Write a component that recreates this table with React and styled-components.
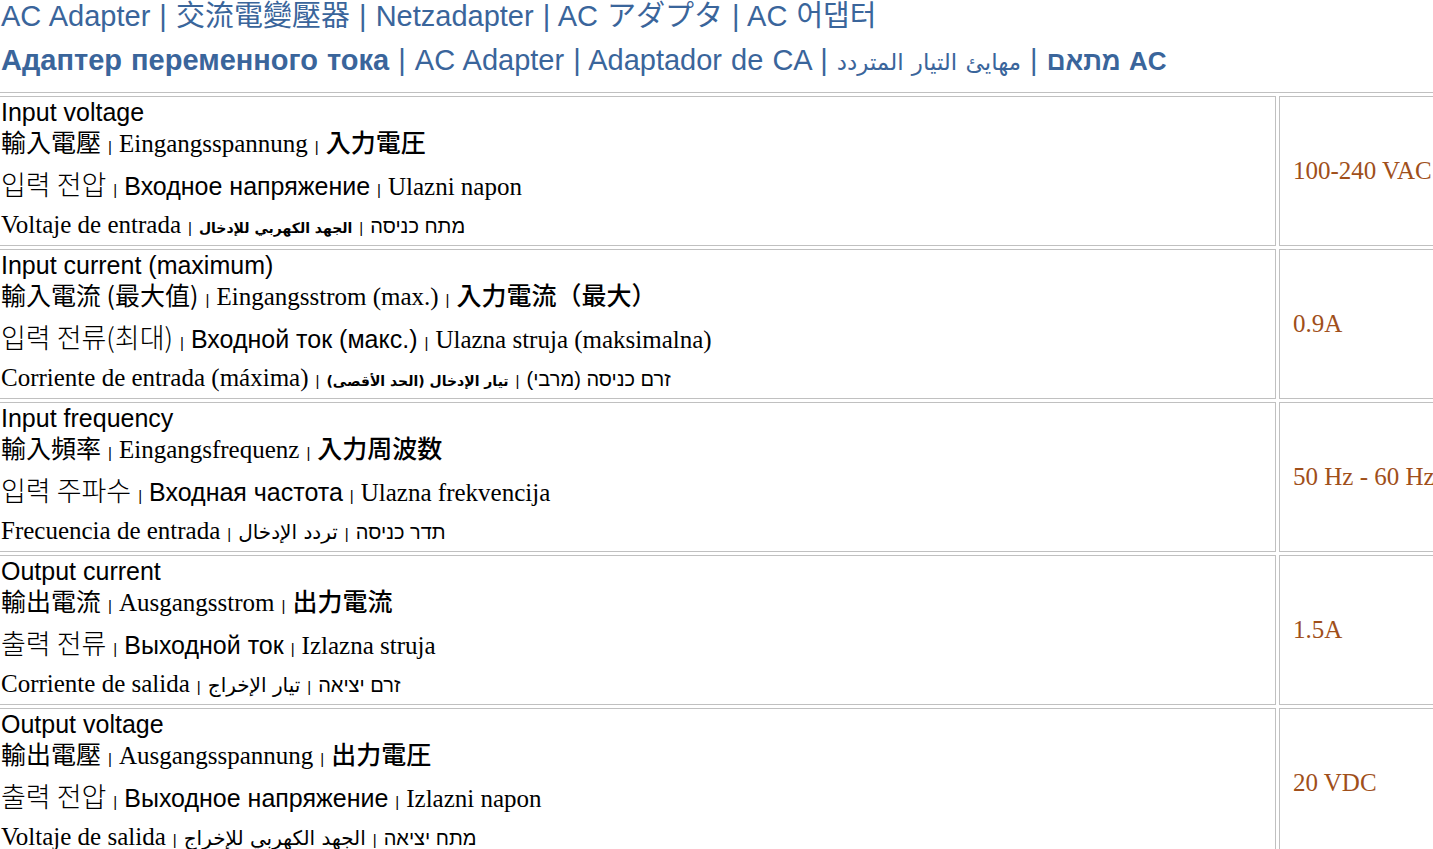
import React from 'react'
import styled, { createGlobalStyle } from 'styled-components'

const GlobalStyle = createGlobalStyle`
  html, body {
    margin: 0;
    padding: 0;
    background: #ffffff;
    overflow: hidden;
  }
  body {
    font-family: "Liberation Serif", "Times New Roman", serif;
    color: #000000;
  }
`;

const rows = [
  {
    en: 'Input voltage',
    zh: '輸入電壓', de: 'Eingangsspannung', ja: '入力電圧',
    ko: '입력 전압', ru: 'Входное напряжение', hr: 'Ulazni napon',
    es: 'Voltaje de entrada', ar: 'الجهد الكهربي للإدخال', arBold: true, he: 'מתח כניסה',
    value: '100-240 VAC',
  },
  {
    en: 'Input current (maximum)',
    zh: '輸入電流 (最大值)', de: 'Eingangsstrom (max.)', ja: '入力電流（最大）',
    ko: '입력 전류(최대)', ru: 'Входной ток (макс.)', hr: 'Ulazna struja (maksimalna)',
    es: 'Corriente de entrada (máxima)', ar: 'تيار الإدخال (الحد الأقصى)', arBold: true, he: 'זרם כניסה (מרבי)',
    value: '0.9A',
  },
  {
    en: 'Input frequency',
    zh: '輸入頻率', de: 'Eingangsfrequenz', ja: '入力周波数',
    ko: '입력 주파수', ru: 'Входная частота', hr: 'Ulazna frekvencija',
    es: 'Frecuencia de entrada', ar: 'تردد الإدخال', he: 'תדר כניסה',
    value: '50 Hz - 60 Hz',
  },
  {
    en: 'Output current',
    zh: '輸出電流', de: 'Ausgangsstrom', ja: '出力電流',
    ko: '출력 전류', ru: 'Выходной ток', hr: 'Izlazna struja',
    es: 'Corriente de salida', ar: 'تيار الإخراج', he: 'זרם יציאה',
    value: '1.5A',
  },
  {
    en: 'Output voltage',
    zh: '輸出電壓', de: 'Ausgangsspannung', ja: '出力電圧',
    ko: '출력 전압', ru: 'Выходное напряжение', hr: 'Izlazni napon',
    es: 'Voltaje de salida', ar: 'الجهد الكهربي للإخراج', he: 'מתח יציאה',
    value: '20 VDC',
  },
];

function App() {
  return (
    <>
      <GlobalStyle />
      <Page>
        <Header>
          <TitleLine $h={27}>
            AC Adapter | <TitleCjk $lang="TC">交流電變壓器</TitleCjk> | Netzadapter | AC <TitleCjk $lang="JP">アダプタ</TitleCjk> | AC <TitleCjk $lang="KR">어댑터</TitleCjk>
          </TitleLine>
          <TitleLine $h={31} $gap={18}>
            <b>Адаптер переменного тока</b> | AC Adapter | Adaptador de CA |{' '}
            <Arabic dir="rtl" $size={23}>مهايئ التيار المتردد</Arabic> |{' '}
            <Hebrew dir="ltr" $size={26} $bold>מתאם AC</Hebrew>
          </TitleLine>
        </Header>

        <SpecTable>
          {rows.map((row) => (
            <React.Fragment key={row.en}>
              <LabelCell>
                <EnglishLine>{row.en}</EnglishLine>
                <Line $h={32}>
                  <Cjk $lang="TC" $size={25}>{row.zh}</Cjk>
                  <Sep><Bar>|</Bar></Sep>{row.de}<Sep><Bar>|</Bar></Sep>
                  <Cjk $lang="JP" $size={25} $bold>{row.ja}</Cjk>
                </Line>
                <Line $h={53}>
                  <Cjk $lang="KR" $size={27} $light>{row.ko}</Cjk>
                  <Sep><Bar>|</Bar></Sep>
                  <Russian>{row.ru}</Russian>
                  <Sep><Bar>|</Bar></Sep>{row.hr}
                </Line>
                <Line $h={29}>
                  {row.es}<Sep><Bar>|</Bar></Sep>
                  <Arabic dir="rtl" $size={row.arBold ? 14 : 20} $bold={row.arBold}>{row.ar}</Arabic>
                  <Sep><Bar>|</Bar></Sep>
                  <Hebrew dir="rtl" $size={20}>{row.he}</Hebrew>
                </Line>
              </LabelCell>
              <ValueCell>{row.value}</ValueCell>
            </React.Fragment>
          ))}
        </SpecTable>
      </Page>
    </>
  )
}

const Page = styled.div`
  display: flex;
  flex-direction: column;
  width: 1433px;
`;

const Header = styled.div`
  display: flex;
  flex-direction: column;
  padding-left: 1px;
  color: #3a659b;
  font-family: "Liberation Sans", Arial, sans-serif;
  font-size: 29px;
  word-spacing: 1px;
`;

const TitleLine = styled.div`
  height: ${p => p.$h}px;
  line-height: ${p => p.$h}px;
  margin-top: ${p => p.$gap || 0}px;
  white-space: nowrap;
  b {
    font-weight: 700;
  }
`;

const TitleCjk = styled.span`
  display: inline-block;
  line-height: 27px;
  font-family: ${p => `"Noto Sans CJK ${p.$lang}"`}, "Noto Sans CJK SC", sans-serif;
  font-size: 29px;
`;

const Cjk = styled.span`
  font-family: ${p => `"Noto Sans CJK ${p.$lang}"`}, "Noto Sans CJK SC", sans-serif;
  font-size: ${p => p.$size}px;
  font-weight: ${p => (p.$bold ? 500 : p.$light ? 300 : 400)};
`;

const Arabic = styled.span`
  unicode-bidi: isolate;
  font-family: "DejaVu Sans", sans-serif;
  font-size: ${p => p.$size}px;
  font-weight: ${p => (p.$bold ? 700 : 400)};
`;

const Hebrew = styled.span`
  unicode-bidi: isolate;
  font-family: "Liberation Sans", Arial, sans-serif;
  font-size: ${p => p.$size}px;
  font-weight: ${p => (p.$bold ? 700 : 400)};
`;

const Russian = styled.span`
  font-family: "Liberation Sans", Arial, sans-serif;
  font-size: 25px;
`;

const Sep = styled.span`
  padding: 0 7px;
`;

const Bar = styled.span`
  font-family: "Liberation Sans", Arial, sans-serif;
  font-size: 15px;
`;

const SpecTable = styled.div`
  display: grid;
  grid-template-columns: 1277px 185px;
  gap: 3px;
  padding: 3px;
  margin: 16px 0 0 -5px;
  width: max-content;
  border: 1px solid #c0c0c0;
`;

const LabelCell = styled.div`
  display: flex;
  flex-direction: column;
  border: 1px solid #c0c0c0;
  padding: 2px 1px 6px 1px;
`;

const EnglishLine = styled.div`
  height: 26px;
  line-height: 26px;
  font-family: "Liberation Sans", Arial, sans-serif;
  font-size: 25px;
  white-space: nowrap;
`;

const Line = styled.div`
  height: ${p => p.$h}px;
  line-height: ${p => p.$h}px;
  font-family: "Liberation Serif", "Times New Roman", serif;
  font-size: 25px;
  white-space: nowrap;
`;

const ValueCell = styled.div`
  display: flex;
  align-items: center;
  border: 1px solid #c0c0c0;
  padding: 0 13px;
  font-family: "Liberation Serif", "Times New Roman", serif;
  font-size: 25px;
  color: #a04f1a;
  white-space: nowrap;
`;

export default App
